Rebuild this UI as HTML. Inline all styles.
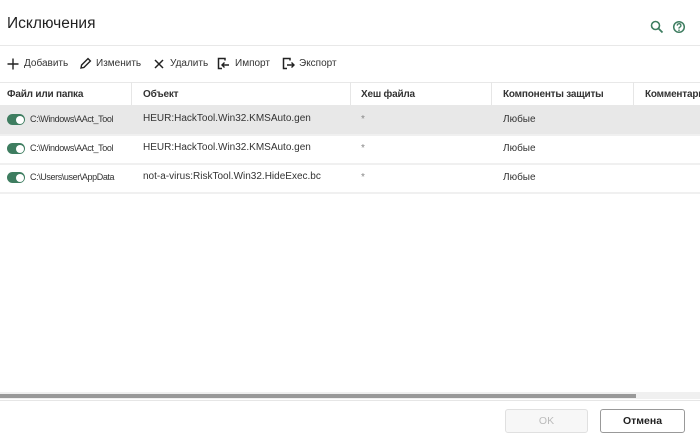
<!DOCTYPE html>
<html><head><meta charset="utf-8"><style>
*{margin:0;padding:0;box-sizing:border-box}
body{width:700px;height:438px;background:#fff;font-family:"Liberation Sans",sans-serif;color:#222;position:relative;overflow:hidden}
.a{position:absolute;white-space:nowrap}
.title{left:7px;top:15px;font-size:15.5px;color:#222}
.hl{left:0;width:700px;height:1px;background:#e8e8e8}
.tb{top:58px;font-size:10px;color:#333}
.hdr{top:89px;font-size:10px;font-weight:bold;color:#333;letter-spacing:-0.2px}
.cell{font-size:10px;color:#333}
.vs{top:82px;width:1px;height:24px;background:#e6e6e6}
.tg{left:7px;width:18px;height:11px;border-radius:6px;background:#3e7d60}
.tg::after{content:"";position:absolute;right:1.5px;top:1.5px;width:8px;height:8px;border-radius:50%;background:#fff}
.btn{top:409px;height:24px;border-radius:3px;font-size:10.5px;text-align:center;line-height:22px}
.p{font-size:9px;letter-spacing:-0.4px;left:30px}
</style></head><body>
<div class="a title">Исключения</div>
<svg class="a" style="left:650px;top:20px" width="14" height="14" viewBox="0 0 14 14"><circle cx="5.5" cy="5.5" r="4" fill="none" stroke="#3e7d60" stroke-width="1.6"/><path d="M8.5 8.5L12.5 12.5" stroke="#3e7d60" stroke-width="1.8"/></svg>
<svg class="a" style="left:672px;top:20px" width="14" height="14" viewBox="0 0 14 14"><circle cx="7" cy="7" r="5.3" fill="none" stroke="#3e7d60" stroke-width="1.5"/><path d="M5.3 5.6a1.8 1.8 0 1 1 2.4 1.6c-.5.2-.7.5-.7 1v.4" fill="none" stroke="#3e7d60" stroke-width="1.3"/><circle cx="7" cy="10.2" r=".8" fill="#3e7d60"/></svg>
<div class="a hl" style="top:45px"></div>
<svg class="a" style="left:7px;top:58px" width="12" height="12"><path d="M6 0.5V11.5M0.5 6H11.5" stroke="#222" stroke-width="1.4"/></svg>
<div class="a tb" style="left:24px">Добавить</div>
<svg class="a" style="left:79px;top:57px" width="13" height="13" viewBox="0 0 13 13"><path d="M2 11l.6-3L9 1.6l2.4 2.4L5 10.4z M2 11l3-.6" fill="none" stroke="#222" stroke-width="1.4"/></svg>
<div class="a tb" style="left:96px">Изменить</div>
<svg class="a" style="left:154px;top:59px" width="10" height="10"><path d="M1 1L9 9M9 1L1 9" stroke="#222" stroke-width="1.5"/></svg>
<div class="a tb" style="left:170px">Удалить</div>
<svg class="a" style="left:217px;top:57px" width="13" height="13" viewBox="0 0 13 13"><path d="M5 1.5H1.5V11.5H5M1.5 1.5H8v2" fill="none" stroke="#222" stroke-width="1.5"/><path d="M12 8H5M7.5 5.5L5 8l2.5 2.5" fill="none" stroke="#222" stroke-width="1.4"/></svg>
<div class="a tb" style="left:235px">Импорт</div>
<svg class="a" style="left:282px;top:57px" width="13" height="13" viewBox="0 0 13 13"><path d="M5 1.5H1.5V11.5H5M1.5 1.5H8v2" fill="none" stroke="#222" stroke-width="1.5"/><path d="M5 8h7M9.5 5.5L12 8l-2.5 2.5" fill="none" stroke="#222" stroke-width="1.4"/></svg>
<div class="a tb" style="left:299px">Экспорт</div>
<div class="a hl" style="top:82px"></div>
<div class="a hdr" style="left:7px">Файл или папка</div>
<div class="a vs" style="left:131px"></div>
<div class="a hdr" style="left:143px">Объект</div>
<div class="a vs" style="left:350px"></div>
<div class="a hdr" style="left:361px">Хеш файла</div>
<div class="a vs" style="left:491px"></div>
<div class="a hdr" style="left:503px">Компоненты защиты</div>
<div class="a vs" style="left:633px"></div>
<div class="a hdr" style="left:645px">Комментарий</div>
<div class="a" style="left:0;top:105px;width:700px;height:29px;background:#e8e8e8"></div>
<div class="a hl" style="top:134px;height:2px;background:#f0f0f0"></div>
<div class="a hl" style="top:163px;height:2px;background:#f0f0f0"></div>
<div class="a hl" style="top:192px;height:2px;background:#f0f0f0"></div>

<div class="a tg" style="top:114px"></div>
<div class="a cell p" style="top:114px">C:\Windows\AAct_Tool</div>
<div class="a cell" style="left:143px;top:113px">HEUR:HackTool.Win32.KMSAuto.gen</div>
<div class="a cell" style="left:361px;top:114px;color:#888">*</div>
<div class="a cell" style="left:503px;top:114px">Любые</div>

<div class="a tg" style="top:143px"></div>
<div class="a cell p" style="top:143px">C:\Windows\AAct_Tool</div>
<div class="a cell" style="left:143px;top:142px">HEUR:HackTool.Win32.KMSAuto.gen</div>
<div class="a cell" style="left:361px;top:143px;color:#888">*</div>
<div class="a cell" style="left:503px;top:143px">Любые</div>

<div class="a tg" style="top:172px"></div>
<div class="a cell p" style="top:172px">C:\Users\user\AppData</div>
<div class="a cell" style="left:143px;top:171px">not-a-virus:RiskTool.Win32.HideExec.bc</div>
<div class="a cell" style="left:361px;top:172px;color:#888">*</div>
<div class="a cell" style="left:503px;top:172px">Любые</div>

<div class="a" style="left:0;top:392px;width:700px;height:7px;background:#f0f0f0"></div>
<div class="a" style="left:0;top:394px;width:636px;height:4px;background:#999"></div>
<div class="a" style="left:0;top:400px;width:700px;height:1px;background:#e6e6e6"></div>
<div class="a btn" style="left:505px;width:83px;border:1px solid #e0e0e0;background:#f7f7f7;color:#bbb">OK</div>
<div class="a btn" style="left:600px;width:85px;border:1px solid #999;background:#fff;color:#222;font-weight:bold">Отмена</div>
</body></html>
